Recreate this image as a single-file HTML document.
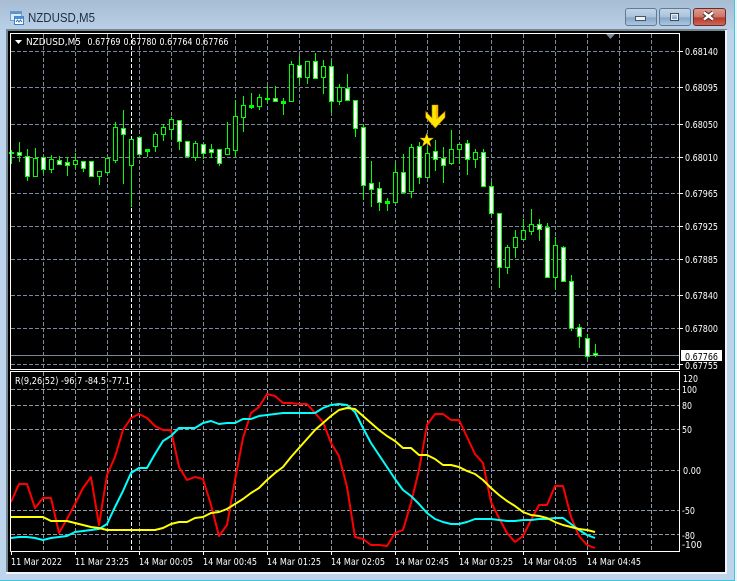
<!DOCTYPE html>
<html><head><meta charset="utf-8"><title>NZDUSD,M5</title>
<style>
html,body{margin:0;padding:0;width:737px;height:581px;overflow:hidden;background:#bdd4ec}
svg{position:absolute;left:0;top:0;display:block}
text{font-family:"DejaVu Sans","Liberation Sans",sans-serif;font-size:10px;fill:#fff}
</style></head><body>
<svg width="737" height="581" viewBox="0 0 737 581" xmlns="http://www.w3.org/2000/svg">
<defs>
<linearGradient id="tb" x1="0" y1="0" x2="0" y2="1"><stop offset="0" stop-color="#a6bdd4"/><stop offset="1" stop-color="#b9d0e7"/></linearGradient>
<linearGradient id="btn" x1="0" y1="0" x2="0" y2="1"><stop offset="0" stop-color="#c4d6e8"/><stop offset=".5" stop-color="#a9c1da"/><stop offset=".55" stop-color="#87a6c6"/><stop offset="1" stop-color="#aec8e2"/></linearGradient>
<linearGradient id="cls" x1="0" y1="0" x2="0" y2="1"><stop offset="0" stop-color="#dd9d92"/><stop offset=".5" stop-color="#cc7566"/><stop offset=".55" stop-color="#b53a2a"/><stop offset="1" stop-color="#cf6a5a"/></linearGradient>
</defs>
<rect width="737" height="581" fill="#eef3f8"/>
<rect width="734" height="580" fill="#bdd4ec"/>
<rect width="734" height="30" fill="url(#tb)"/>
<rect x="734" y="0" width="1" height="581" fill="#3cc8dc"/>
<rect x="0" y="580" width="735" height="1" fill="#3cc8dc"/>
<!-- icon -->
<rect x="10.5" y="11.5" width="11" height="9" fill="#dcebfa" stroke="#6fa0d0"/>
<rect x="10.5" y="11.5" width="11" height="2.5" fill="#5b93d0"/>
<rect x="14.5" y="16.5" width="9" height="8" fill="#fff" stroke="#3f80c4"/>
<rect x="14.5" y="16.5" width="9" height="2.5" fill="#4f8fd2"/>
<path d="M16 22l1.5-2 1.5 2 1.5-2 1.5 2" fill="none" stroke="#3a6ea8"/>
<text x="28" y="22" textLength="67" lengthAdjust="spacingAndGlyphs" style="font-family:'Liberation Sans',sans-serif;font-size:13px;fill:#1c2f48">NZDUSD,M5</text>
<!-- buttons -->
<rect x="625.5" y="8.5" width="31" height="17" rx="2.5" fill="url(#btn)" stroke="#5f7b98"/>
<rect x="635.5" y="16.5" width="10" height="4" fill="#eef2f6" stroke="#44566a"/>
<rect x="659.5" y="8.5" width="31" height="17" rx="2.5" fill="url(#btn)" stroke="#5f7b98"/>
<rect x="670.5" y="13.5" width="8" height="7" fill="none" stroke="#3b4c60"/>
<rect x="671.5" y="14.5" width="6" height="5" fill="none" stroke="#eef2f6"/>
<rect x="693.5" y="8.5" width="32" height="17" rx="2.5" fill="url(#cls)" stroke="#6e2a26"/>
<path d="M704 12.5l9 7M713 12.5l-9 7" stroke="#4a2a2a" stroke-width="4.5"/>
<path d="M704 12.5l9 7M713 12.5l-9 7" stroke="#fff" stroke-width="2.5"/>
<!-- chart container -->
<rect x="6" y="29" width="721" height="545" fill="#76868f"/>
<rect x="725" y="30" width="2" height="544" fill="#f0f4f8"/>
<rect x="6" y="572" width="721" height="2" fill="#f0f4f8"/>
<rect x="8" y="31" width="717" height="541" fill="#000"/>
<g>
<!-- main grid -->
<path d="M11 51.5H679M11 87.5H679M11 124.5H679M11 157.5H679M11 193.5H679M11 226.5H679M11 259.5H679M11 295.5H679M11 328.5H679M11 364.5H679M43.5 34V369M75.5 34V369M107.5 34V369M139.5 34V369M171.5 34V369M203.5 34V369M235.5 34V369M267.5 34V369M299.5 34V369M331.5 34V369M363.5 34V369M395.5 34V369M427.5 34V369M459.5 34V369M491.5 34V369M523.5 34V369M555.5 34V369M587.5 34V369M619.5 34V369M651.5 34V369" stroke="#7b8a9a" stroke-width="1" stroke-dasharray="4 2" fill="none"/>
<path d="M131.5 34V369M131.5 372V551" stroke="#fff" stroke-dasharray="4 2" fill="none"/>
<path d="M11 355.5H679" stroke="#778899"/>
<!-- sub grid -->
<path d="M11 389.5H679M11 405.5H679M11 429.5H679M11 470.5H679M11 510.5H679M11 534.5H679M43.5 372V551M75.5 372V551M107.5 372V551M139.5 372V551M171.5 372V551M203.5 372V551M235.5 372V551M267.5 372V551M299.5 372V551M331.5 372V551M363.5 372V551M395.5 372V551M427.5 372V551M459.5 372V551M491.5 372V551M523.5 372V551M555.5 372V551M587.5 372V551M619.5 372V551M651.5 372V551" stroke="#8d99a6" stroke-dasharray="4 2" fill="none"/>
<!-- wicks -->
<path stroke="#0f0" fill="none" d="M11.5 150V164M19.5 142V162M27.5 149V181M35.5 148V176M43.5 157V174M51.5 155V173M59.5 156V165M67.5 157V176M75.5 153V168M83.5 161V172M91.5 161V176M99.5 171V185M107.5 157V174M115.5 122V163M123.5 110V184M131.5 139V207M147.5 149V157M155.5 132V152M163.5 124V141M171.5 117V139M179.5 120V150M195.5 141V161M203.5 144V159M211.5 144V158M219.5 149V166M227.5 122V154M235.5 100V157M243.5 96V132M251.5 93V109M259.5 94V110M267.5 86V103M275.5 86V102M283.5 98V115M291.5 61V101M299.5 56V84M307.5 61V84M315.5 53V78M323.5 60V94M331.5 61V113M339.5 84V105M347.5 74V100M355.5 100V137M363.5 125V200M371.5 161V207M379.5 182V211M387.5 198V211M395.5 163V202M403.5 154V193M411.5 144V198M419.5 142V184M427.5 146V178M435.5 140V171M443.5 147V183M451.5 130V165M459.5 144V164M467.5 140V175M475.5 149V168M483.5 149V186M491.5 182V215M499.5 213V288M507.5 245V274M515.5 230V258M523.5 219V240M531.5 209V235M539.5 219V241M547.5 223V277M555.5 237V290M563.5 246V282M571.5 275V331M579.5 324V348M587.5 334V359M595.5 344V357"/>
</g>
<g stroke="#0f0" stroke-width="1">
<!-- hollow -->
<g fill="#000">
<rect x="33.5" y="158.5" width="4" height="18"/><rect x="49.5" y="159.5" width="4" height="10"/><rect x="73.5" y="160.5" width="4" height="4"/><rect x="97.5" y="171.5" width="4" height="5"/><rect x="105.5" y="158.5" width="4" height="14"/><rect x="113.5" y="127.5" width="4" height="33"/><rect x="129.5" y="139.5" width="4" height="26"/><rect x="153.5" y="134.5" width="4" height="12"/><rect x="161.5" y="127.5" width="4" height="7"/><rect x="169.5" y="119.5" width="4" height="10"/><rect x="193.5" y="143.5" width="4" height="14"/><rect x="225.5" y="148.5" width="4" height="6"/><rect x="233.5" y="116.5" width="4" height="34"/><rect x="241.5" y="105.5" width="4" height="12"/><rect x="257.5" y="97.5" width="4" height="9"/><rect x="289.5" y="64.5" width="4" height="37"/><rect x="305.5" y="61.5" width="4" height="16"/><rect x="321.5" y="66.5" width="4" height="11"/><rect x="337.5" y="87.5" width="4" height="14"/><rect x="393.5" y="172.5" width="4" height="30"/><rect x="409.5" y="147.5" width="4" height="44"/><rect x="425.5" y="153.5" width="4" height="24"/><rect x="449.5" y="149.5" width="4" height="14"/><rect x="457.5" y="144.5" width="4" height="5"/><rect x="473.5" y="152.5" width="4" height="7"/><rect x="505.5" y="247.5" width="4" height="20"/><rect x="513.5" y="237.5" width="4" height="10"/><rect x="521.5" y="230.5" width="4" height="9"/><rect x="529.5" y="224.5" width="4" height="7"/><rect x="553.5" y="245.5" width="4" height="32"/>
</g>
<!-- white -->
<g fill="#fff">
<rect x="17.5" y="152.5" width="4" height="3"/><rect x="25.5" y="156.5" width="4" height="20"/><rect x="41.5" y="157.5" width="4" height="12"/><rect x="57.5" y="160.5" width="4" height="4"/><rect x="65.5" y="162.5" width="4" height="3"/><rect x="81.5" y="161.5" width="4" height="7"/><rect x="89.5" y="161.5" width="4" height="15"/><rect x="121.5" y="128.5" width="4" height="6"/><rect x="137.5" y="137.5" width="4" height="17"/><rect x="177.5" y="120.5" width="4" height="21"/><rect x="185.5" y="141.5" width="4" height="15"/><rect x="201.5" y="144.5" width="4" height="9"/><rect x="209.5" y="149.5" width="4" height="3"/><rect x="217.5" y="149.5" width="4" height="14"/><rect x="273.5" y="98.5" width="4" height="3"/><rect x="297.5" y="65.5" width="4" height="12"/><rect x="313.5" y="61.5" width="4" height="17"/><rect x="329.5" y="66.5" width="4" height="35"/><rect x="345.5" y="88.5" width="4" height="12"/><rect x="353.5" y="100.5" width="4" height="28"/><rect x="361.5" y="127.5" width="4" height="58"/><rect x="369.5" y="183.5" width="4" height="6"/><rect x="377.5" y="188.5" width="4" height="14"/><rect x="401.5" y="172.5" width="4" height="20"/><rect x="417.5" y="146.5" width="4" height="31"/><rect x="433.5" y="151.5" width="4" height="8"/><rect x="441.5" y="158.5" width="4" height="7"/><rect x="465.5" y="143.5" width="4" height="16"/><rect x="481.5" y="152.5" width="4" height="34"/><rect x="489.5" y="186.5" width="4" height="27"/><rect x="497.5" y="213.5" width="4" height="54"/><rect x="537.5" y="224.5" width="4" height="5"/><rect x="545.5" y="227.5" width="4" height="50"/><rect x="561.5" y="247.5" width="4" height="34"/><rect x="569.5" y="281.5" width="4" height="47"/><rect x="577.5" y="327.5" width="4" height="9"/><rect x="585.5" y="338.5" width="4" height="18"/><rect x="593.5" y="353.5" width="4" height="2"/>
</g>
<!-- dojis -->
<g fill="#0f0">
<rect x="9.5" y="152.5" width="4" height="1"/><rect x="145.5" y="149.5" width="4" height="2"/><rect x="249.5" y="105.5" width="4" height="2"/><rect x="265.5" y="98.5" width="4" height="1"/><rect x="281.5" y="101.5" width="4" height="2"/><rect x="385.5" y="201.5" width="4" height="2"/>
</g>
</g>
<!-- arrow & star -->
<path d="M432 105h6v13l7-6.5v6L435.3 128 425.7 117.5v-6l6.3 6.5z" fill="#ffe600" stroke="#c08000" stroke-width=".6"/>
<rect x="436" y="105" width="2" height="14" fill="#ffb000"/>
<path d="M426.7 133l1.8 5h5.2l-4.2 3.2 1.6 5.3-4.4-3.2-4.4 3.2 1.6-5.3-4.2-3.2h5.2z" fill="#ffee00" stroke="#a06000" stroke-width=".5"/>
<!-- indicator lines -->
<g fill="none" stroke-width="2" stroke-linejoin="round">
<polyline stroke="#f00" points="11,502 19,484 27,484 35,508 43,498 51,498 59,533 67,519 75,504 83,488 91,477 99,525 107,475 115,457 123,430 131,418 139,414 147,418 155,426 163,430 171,430 179,467 187,480 195,477 203,479 211,505 219,536 227,525 235,480 243,438 251,413 259,407 267,394 275,396 283,403 291,403 299,404 307,404 315,413 323,422 331,443 339,456 347,487 355,537 363,539 371,545 379,545 387,546 395,533 403,530 411,503 419,470 427,425 435,414 443,414 451,420 459,420 467,437 475,454 483,463 491,502 499,518 507,533 515,542 523,536 531,520 539,505 547,505 555,486 563,486 571,517 579,536 587,545 595,548"/>
<polyline stroke="#0ff" points="11,538 19,537 27,537 35,538 43,540 51,538 59,537 67,536 75,532 83,531 91,530 99,529 107,524 115,507 123,491 131,473 139,468 147,468 155,454 163,441 171,436 179,428 187,428 195,428 203,423 211,421 219,424 227,423 235,423 243,419 251,419 259,416 267,415 275,414 283,413 291,413 299,413 307,413 315,413 323,408 331,405 339,404 347,405 355,412 363,428 371,443 379,455 387,467 395,479 403,490 411,496 419,504 427,513 435,519 443,522 451,524 459,524 467,522 475,519 483,519 491,519 499,520 507,521 515,521 523,520 531,520 539,519 547,519 555,518 563,518 571,524 579,530 587,535 595,538"/>
<polyline stroke="#ff0" points="11,517 19,517 27,517 35,517 43,517 51,521 59,521 67,521 75,523 83,525 91,527 99,528 107,530 115,530 123,530 131,530 139,530 147,530 155,530 163,528 171,524 179,522 187,522 195,518 203,517 211,513 219,512 227,509 235,504 243,499 251,493 259,488 267,480 275,473 283,467 291,457 299,448 307,439 315,430 323,423 331,416 339,410 347,408 355,409 363,416 371,423 379,430 387,436 395,441 403,448 411,448 419,455 427,455 435,459 443,465 451,465 459,467 467,471 475,474 483,480 491,488 499,495 507,501 515,506 523,512 531,515 539,516 547,518 555,522 563,525 571,527 579,529 587,530 595,532"/>
</g>
<!-- frames -->
<g fill="none" stroke="#fff">
<path d="M10.5 369.5V33.5H679.5V369.5H10.5"/>
<path d="M10.5 551.5V371.5H679.5V551.5H10.5"/>
<path d="M680 51.5h3M680 87.5h3M680 124.5h3M680 157.5h3M680 193.5h3M680 226.5h3M680 259.5h3M680 295.5h3M680 328.5h3M680 364.5h3M11.5 552V555M75.5 552V555M139.5 552V555M203.5 552V555M267.5 552V555M331.5 552V555M395.5 552V555M459.5 552V555M523.5 552V555M587.5 552V555"/>
</g>
<path d="M606 34h9l-4.5 5z" fill="#778899"/>
<path d="M15 40h7l-3.5 4z" fill="#fff"/>
<text x="26" y="45" textLength="55" lengthAdjust="spacingAndGlyphs">NZDUSD,M5</text>
<text x="87.5" y="45" textLength="33" lengthAdjust="spacingAndGlyphs">0.67769</text>
<text x="123.5" y="45" textLength="33" lengthAdjust="spacingAndGlyphs">0.67780</text>
<text x="159.5" y="45" textLength="33" lengthAdjust="spacingAndGlyphs">0.67764</text>
<text x="195.5" y="45" textLength="33" lengthAdjust="spacingAndGlyphs">0.67766</text>
<text x="15" y="384" textLength="115" lengthAdjust="spacingAndGlyphs">R(9,26,52) -96.7 -84.5 -77.1</text>
<!-- price labels -->
<text x="685" y="55" textLength="33" lengthAdjust="spacingAndGlyphs">0.68140</text>
<text x="685" y="91" textLength="33" lengthAdjust="spacingAndGlyphs">0.68095</text>
<text x="685" y="128" textLength="33" lengthAdjust="spacingAndGlyphs">0.68050</text>
<text x="685" y="161" textLength="33" lengthAdjust="spacingAndGlyphs">0.68010</text>
<text x="685" y="197" textLength="33" lengthAdjust="spacingAndGlyphs">0.67965</text>
<text x="685" y="230" textLength="33" lengthAdjust="spacingAndGlyphs">0.67925</text>
<text x="685" y="263" textLength="33" lengthAdjust="spacingAndGlyphs">0.67885</text>
<text x="685" y="299" textLength="33" lengthAdjust="spacingAndGlyphs">0.67840</text>
<text x="685" y="332" textLength="33" lengthAdjust="spacingAndGlyphs">0.67800</text>
<text x="685" y="369" textLength="33" lengthAdjust="spacingAndGlyphs">0.67755</text>
<rect x="681" y="350" width="41" height="11" fill="#fff"/>
<text x="685" y="360" textLength="33" lengthAdjust="spacingAndGlyphs" style="fill:#000">0.67766</text>
<!-- indicator labels -->
<text x="683" y="382" textLength="15" lengthAdjust="spacingAndGlyphs">120</text>
<text x="682" y="393" textLength="15" lengthAdjust="spacingAndGlyphs">100</text>
<text x="682" y="409" textLength="10" lengthAdjust="spacingAndGlyphs">80</text>
<text x="682" y="433" textLength="10" lengthAdjust="spacingAndGlyphs">50</text>
<text x="683" y="474" textLength="18" lengthAdjust="spacingAndGlyphs">0.00</text>
<text x="682" y="514" textLength="13" lengthAdjust="spacingAndGlyphs">-50</text>
<text x="682" y="539" textLength="13" lengthAdjust="spacingAndGlyphs">-80</text>
<text x="682" y="548" textLength="20" lengthAdjust="spacingAndGlyphs">-100</text>
<!-- time labels -->
<text x="11" y="565" textLength="51" lengthAdjust="spacingAndGlyphs">11 Mar 2022</text>
<text x="75" y="565" textLength="54" lengthAdjust="spacingAndGlyphs">11 Mar 23:25</text>
<text x="139" y="565" textLength="54" lengthAdjust="spacingAndGlyphs">14 Mar 00:05</text>
<text x="203" y="565" textLength="54" lengthAdjust="spacingAndGlyphs">14 Mar 00:45</text>
<text x="267" y="565" textLength="54" lengthAdjust="spacingAndGlyphs">14 Mar 01:25</text>
<text x="331" y="565" textLength="54" lengthAdjust="spacingAndGlyphs">14 Mar 02:05</text>
<text x="395" y="565" textLength="54" lengthAdjust="spacingAndGlyphs">14 Mar 02:45</text>
<text x="459" y="565" textLength="54" lengthAdjust="spacingAndGlyphs">14 Mar 03:25</text>
<text x="523" y="565" textLength="54" lengthAdjust="spacingAndGlyphs">14 Mar 04:05</text>
<text x="587" y="565" textLength="54" lengthAdjust="spacingAndGlyphs">14 Mar 04:45</text>
</svg>
</body></html>
